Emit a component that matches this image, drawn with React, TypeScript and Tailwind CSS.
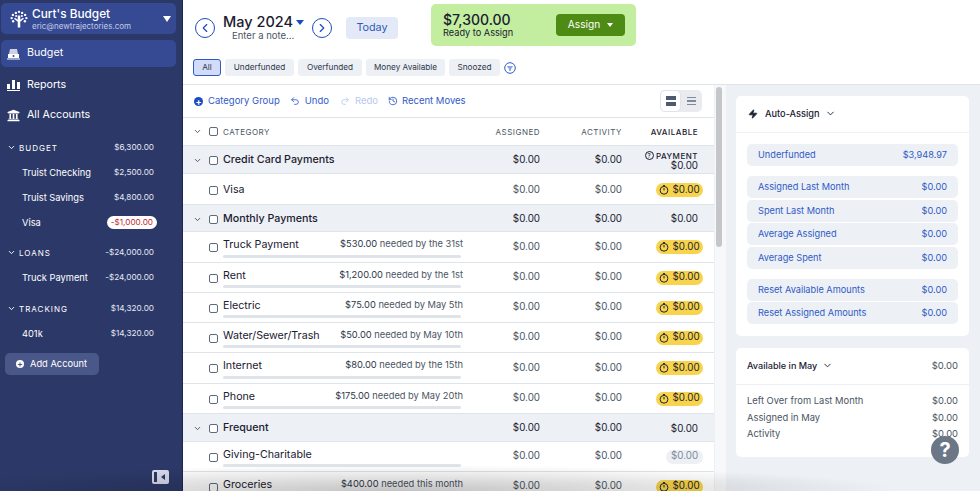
import React from 'react';
import { ChevronDown, ChevronLeft, ChevronRight, History, Undo2, Redo2, Zap } from 'lucide-react';
import { FaUniversity } from 'react-icons/fa';

interface SideAccount {
    name: string;
    amount: string;
    negative?: boolean;
}

interface SideGroup {
    title: string;
    total: string;
    accounts: SideAccount[];
}

const sideGroups: SideGroup[] = [
    {
        title: 'BUDGET',
        total: '$6,300.00',
        accounts: [
            { name: 'Truist Checking', amount: '$2,500.00' },
            { name: 'Truist Savings', amount: '$4,800.00' },
            { name: 'Visa', amount: '-$1,000.00', negative: true },
        ],
    },
    { title: 'LOANS', total: '-$24,000.00', accounts: [{ name: 'Truck Payment', amount: '-$24,000.00' }] },
    { title: 'TRACKING', total: '$14,320.00', accounts: [{ name: '401k', amount: '$14,320.00' }] },
];

const Checkbox = () => <span className="block h-[9px] w-[9px] shrink-0 rounded-[2px] border border-[#5f6b7c] bg-white" />;

const Clock = () => (
    <svg width="10" height="10" viewBox="0 0 10 10" fill="none" stroke="#1f2430" strokeWidth="1">
        <circle cx="5" cy="5.3" r="3.9" />
        <path d="M5 3v2.4" />
        <path d="M4 .6h2" />
    </svg>
);

const Yellow = () => (
    <span className="flex h-[14px] w-[47px] items-center justify-center gap-[3px] rounded-full bg-[#f8d44c] text-[9.8px] text-[#1f2430]">
        <Clock />
        $0.00
    </span>
);

const Logo = () => (
    <svg width="18" height="18" viewBox="0 0 20 20" fill="white">
        <path d="M8.6 19.5V13L4.5 9.6l1-1.1 3.1 2.2V6h2.8v4.7l3.1-2.2 1 1.1-4.1 3.4v6.5z" />
        <circle cx="3.2" cy="5.5" r="1.3" />
        <circle cx="6.5" cy="3.2" r="1.3" />
        <circle cx="10" cy="2" r="1.3" />
        <circle cx="13.5" cy="3.2" r="1.3" />
        <circle cx="16.8" cy="5.5" r="1.3" />
        <circle cx="1.8" cy="9" r="1.3" />
        <circle cx="18.2" cy="9" r="1.3" />
        <circle cx="3.5" cy="12.5" r="1.3" />
        <circle cx="16.5" cy="12.5" r="1.3" />
        <circle cx="6.8" cy="6.6" r="1.1" />
        <circle cx="13.2" cy="6.6" r="1.1" />
    </svg>
);

const Sidebar = () => (
    <aside className="flex h-full w-[183px] shrink-0 flex-col border-r border-r-[#1d2750] bg-[#2c3968] pt-[3px] text-white">
        <div className="ml-px mr-[6px] flex h-[31px] items-center rounded-[5px] bg-[#364a93] pl-[9px] pr-[5px]">
            <Logo />
            <div className="ml-[4px] flex-1 leading-none">
                <div className="text-[11.8px] font-medium leading-[14px]">Curt's Budget</div>
                <div className="text-[8px] leading-[10px] text-[#c3cbe6]">eric@newtrajectories.com</div>
            </div>
            <span className="h-0 w-0 border-x-[4.5px] border-t-[6px] border-x-transparent border-t-white" />
        </div>
        <div className="ml-px mr-[6px] mt-[6px] flex h-[27px] items-center gap-[7px] rounded-[5px] bg-[#364a93] pl-[6px] text-[10.7px]">
            <svg width="13" height="12" viewBox="0 0 13 12" fill="white">
                <path d="M3 1h7l1 5H2z" opacity=".75" />
                <path d="M1 6h11v4H1z" />
                <path d="M0 10.5h13v1H0z" />
                <circle cx="6.5" cy="8" r="1" fill="#364a93" />
            </svg>
            Budget
        </div>
        <div className="mt-[3px] flex h-[30px] items-center gap-[7px] pl-[7px] text-[10.7px]">
            <svg width="13" height="12" viewBox="0 0 13 12" fill="white">
                <path d="M0 5h3v5H0zM5 1h3v9H5zM10 3h3v7h-3zM0 11h13v1H0z" />
            </svg>
            Reports
        </div>
        <div className="flex h-[30px] items-center gap-[7px] pl-[7px] text-[10.7px]">
            <FaUniversity size={13} />
            All Accounts
        </div>
        {sideGroups.map((group, i) => (
            <div key={group.title} className={i === 2 ? 'mt-[6px]' : 'mt-[5px]'}>
                <div className="flex h-[25px] items-center pl-[7px] pr-[28px] text-[8px]">
                    <ChevronDown size={9} strokeWidth={2.5} />
                    <span className="ml-[3px] flex-1 tracking-[1px]">{group.title}</span>
                    <span className="text-[8.2px] text-[#e6e9f5]">{group.total}</span>
                </div>
                {group.accounts.map((a) => (
                    <div key={a.name} className="flex h-[25px] items-center pl-[22px] pr-[28px] text-[9.3px]">
                        <span className="flex-1">{a.name}</span>
                        {a.negative ? (
                            <span className="-mr-[3px] rounded-full bg-white px-[4px] text-[8.2px] leading-[13px] text-[#c1272d]">{a.amount}</span>
                        ) : (
                            <span className="text-[8.2px] text-[#e6e9f5]">{a.amount}</span>
                        )}
                    </div>
                ))}
            </div>
        ))}
        <div className="ml-[5px] mt-[7px] flex h-[22px] w-[94px] items-center gap-[6px] rounded-[5px] bg-[#4a5789] pl-[11px] text-[9.3px]">
            <span className="flex h-[8px] w-[8px] items-center justify-center rounded-full bg-white text-[8px] font-bold leading-none text-[#4a5789]">+</span>
            Add Account
        </div>
        <div className="mt-auto mb-[7px] ml-[152px] flex h-[14px] w-[17px] items-center rounded-[2px] bg-[#d7dbea] pl-[2px]">
            <span className="h-[10px] w-[3px] bg-[#2c3968]" />
            <span className="ml-[4px] h-0 w-0 border-y-[3px] border-r-[4px] border-y-transparent border-r-[#2c3968]" />
        </div>
    </aside>
);

const TopBar = () => (
    <div className="h-[85px] shrink-0 border-b border-b-[#dfe3ea] pl-[10px]">
        <div className="flex h-[47px] items-start">
            <div className="ml-[2px] mt-[18px] flex h-[20px] w-[20px] items-center justify-center rounded-full border-[1.5px] border-[#1b4bc4] text-[#1b4bc4]">
                <ChevronLeft size={14} />
            </div>
            <div className="ml-[8px] mt-[14px] w-[81px]">
                <div className="flex items-center whitespace-nowrap text-[14.5px] font-medium leading-[16px] text-[#1a2030]">
                    May 2024
                    <span className="ml-[3px] h-0 w-0 border-x-[4.5px] border-t-[5px] border-x-transparent border-t-[#1b4bc4]" />
                </div>
                <div className="ml-[9px] text-[9.5px] leading-[11px] text-[#4b5563]">Enter a note...</div>
            </div>
            <div className="ml-[8px] mt-[18px] flex h-[20px] w-[20px] items-center justify-center rounded-full border-[1.5px] border-[#1b4bc4] text-[#1b4bc4]">
                <ChevronRight size={14} />
            </div>
            <div className="ml-[14px] mt-[17px] flex h-[22px] w-[52px] items-center justify-center rounded-[4px] bg-[#e4e9f8] text-[10.8px] text-[#2f5bb7]">Today</div>
            <div className="ml-[33px] mt-[4px] flex h-[42px] w-[205px] items-center rounded-[5px] bg-[#c3ee9f] pl-[12px] pr-[11px]">
                <div className="flex-1 leading-none">
                    <div className="text-[14px] font-medium leading-[15px] text-[#1a2030]">$7,300.00</div>
                    <div className="text-[9.2px] leading-[12px] text-[#1a2030]">Ready to Assign</div>
                </div>
                <div className="flex h-[22px] w-[69px] items-center justify-center gap-[7px] rounded-[4px] bg-[#4d8b14] text-[10.2px] text-white">
                    Assign
                    <span className="h-0 w-0 border-x-[3px] border-t-[4px] border-x-transparent border-t-white" />
                </div>
            </div>
        </div>
        <div className="mt-[12px] flex items-center gap-[4px] text-[8.2px] text-[#2d3748]">
            <span className="flex h-[17px] w-[28px] items-center justify-center rounded-[3px] border border-[#2f5bc7] bg-[#d2dbf8]">All</span>
            <span className="flex h-[17px] w-[69px] items-center justify-center rounded-[3px] bg-[#edf0f5]">Underfunded</span>
            <span className="flex h-[17px] w-[64px] items-center justify-center rounded-[3px] bg-[#edf0f5]">Overfunded</span>
            <span className="flex h-[17px] w-[79px] items-center justify-center rounded-[3px] bg-[#edf0f5]">Money Available</span>
            <span className="flex h-[17px] w-[51px] items-center justify-center rounded-[3px] bg-[#edf0f5]">Snoozed</span>
            <svg width="12" height="12" viewBox="0 0 12 12" fill="none">
                <circle cx="6" cy="6" r="5.3" stroke="#2f5bc7" />
                <path d="M2.8 4h6.4L7 7v1.8H5V7z" fill="#8aa3e6" />
            </svg>
        </div>
    </div>
);

const Toolbar = () => (
    <div className="flex h-[33px] shrink-0 items-center border-b border-b-[#dfe3ea] pl-[11px] pr-[12px] text-[9.5px] text-[#2f5bc7]">
        <span className="flex h-[9px] w-[9px] items-center justify-center rounded-full bg-[#1b4bc4] text-[9px] font-bold leading-none text-white">+</span>
        <span className="ml-[5px]">Category Group</span>
        <Undo2 size={10} className="ml-[10px]" />
        <span className="ml-[5px]">Undo</span>
        <Redo2 size={10} className="ml-[11px] text-[#b9c8ef]" />
        <span className="ml-[5px] text-[#b9c8ef]">Redo</span>
        <History size={10} className="ml-[10px]" />
        <span className="ml-[4px]">Recent Moves</span>
        <div className="ml-auto flex h-[22px] w-[42px] items-center rounded-[5px] bg-[#e9ebef]">
            <span className="flex h-[22px] w-[21px] flex-col items-center justify-center gap-[2px] rounded-[5px] border border-[#dfe3ea] bg-white">
                <span className="h-[4px] w-[10px] bg-[#4d5a70]" />
                <span className="h-[4px] w-[10px] bg-[#4d5a70]" />
            </span>
            <span className="flex w-[21px] flex-col items-center gap-[2px]">
                <span className="h-[1.5px] w-[9px] bg-[#7f8a9a]" />
                <span className="h-[1.5px] w-[9px] bg-[#7f8a9a]" />
                <span className="h-[1.5px] w-[9px] bg-[#7f8a9a]" />
            </span>
        </div>
    </div>
);

const GroupRow = ({ name, h = 27, payment }: { name: string; h?: number; payment?: boolean }) => (
    <div style={{ height: h }} className="flex shrink-0 items-center border-b border-b-[#dfe3ea] bg-[#edf0f5] pl-[10px] pr-[16px] pt-[2px] text-[9.8px] text-[#1a2030]">
        <ChevronDown size={9} className="mr-[7px] text-[#4b5563]" strokeWidth={2.5} />
        <Checkbox />
        <span className="ml-[5px] flex-1 text-[10.7px] font-medium">{name}</span>
        <span className="w-[82px] text-right">$0.00</span>
        <span className="w-[82px] text-right">$0.00</span>
        <div className="w-[76px] text-right leading-[10px]">
            {payment && (
                <div className="flex items-center justify-end gap-[2px] text-[8px] font-medium tracking-[0.5px]">
                    <span className="flex h-[9px] w-[9px] items-center justify-center rounded-full border border-[#1a2030] text-[6px] leading-none">?</span>
                    PAYMENT
                </div>
            )}
            $0.00
        </div>
    </div>
);

interface CatProps {
    name: string;
    needed?: string;
    detail?: string;
    h?: number;
    grey?: boolean;
    bar?: boolean;
}

const CatRow = ({ name, needed, detail, h = 30, grey, bar = true }: CatProps) => (
    <div style={{ height: h }} className={`flex shrink-0 items-center border-b border-b-[#dfe3ea] bg-white pl-[26px] pr-[11px] text-[9.8px] ${bar ? '' : 'pt-[2px]'}`}>
        <span className={bar ? 'mt-[1px]' : ''}>
            <Checkbox />
        </span>
        <div className="ml-[5px] w-[240px]">
            <div className="flex items-baseline justify-between">
                <span className={`text-[10.7px] text-[#1a2030] ${bar ? 'translate-y-px' : ''}`}>{name}</span>
                {needed && (
                    <span className="text-[9.3px] text-[#4b5563]">
                        <span className="text-[#2d3748]">{needed}</span> {detail}
                    </span>
                )}
            </div>
            {bar && <div className="mt-[2px] h-[3px] w-[238px] rounded-full bg-[#dfe3ea]" />}
        </div>
        <span className="w-[77px] text-right text-[#4b5563]">$0.00</span>
        <span className="w-[82px] text-right text-[#4b5563]">$0.00</span>
        <span className="flex w-[81px] justify-end">
            {grey ? (
                <span className="flex h-[14px] w-[37px] items-center justify-center rounded-full bg-[#edf0f5] text-[#7f8a9a]">$0.00</span>
            ) : (
                <Yellow />
            )}
        </span>
    </div>
);

const BudgetTable = () => (
    <div className="flex w-[531px] shrink-0 flex-col overflow-hidden">
        <Toolbar />
        <div className="flex h-[28px] shrink-0 items-center border-b border-b-[#dfe3ea] pl-[10px] pr-[16px] text-[8px] tracking-[0.5px] text-[#4b5563]">
            <ChevronDown size={9} className="mr-[7px]" strokeWidth={2.5} />
            <Checkbox />
            <span className="ml-[5px] flex-1">CATEGORY</span>
            <span className="w-[82px] text-right">ASSIGNED</span>
            <span className="w-[82px] text-right">ACTIVITY</span>
            <span className="w-[76px] text-right font-medium text-[#1a2030]">AVAILABLE</span>
        </div>
        <GroupRow name="Credit Card Payments" h={28} payment />
        <CatRow name="Visa" h={31} bar={false} />
        <GroupRow name="Monthly Payments" h={27} />
        <CatRow name="Truck Payment" needed="$530.00" detail="needed by the 31st" h={31} />
        <CatRow name="Rent" needed="$1,200.00" detail="needed by the 1st" />
        <CatRow name="Electric" needed="$75.00" detail="needed by May 5th" />
        <CatRow name="Water/Sewer/Trash" needed="$50.00" detail="needed by May 10th" />
        <CatRow name="Internet" needed="$80.00" detail="needed by the 15th" h={31} />
        <CatRow name="Phone" needed="$175.00" detail="needed by May 20th" />
        <GroupRow name="Frequent" h={28} />
        <CatRow name="Giving-Charitable" grey />
        <CatRow name="Groceries" needed="$400.00" detail="needed this month" />
    </div>
);

const AssignRow = ({ label, value }: { label: string; value: string }) => (
    <div className="flex h-[22px] items-center justify-between rounded-[5px] bg-[#edf0f5] px-[11px] text-[9.2px] text-[#2f5bc7]">
        <span>{label}</span>
        <span>{value}</span>
    </div>
);

const Inspector = () => (
    <div className="flex w-[253px] shrink-0 flex-col bg-[#edf0f5] pl-[9px] pr-[11px] pt-[11px]">
        <div className="h-[240px] rounded-[5px] bg-white">
            <div className="flex h-[37px] items-center gap-[7px] border-b border-b-[#edf0f5] pl-[12px] text-[9.2px] font-medium text-[#1a2030]">
                <Zap size={10} fill="#1a2030" />
                <span className="flex items-center gap-[6px]">
                    Auto-Assign
                    <ChevronDown size={11} />
                </span>
            </div>
            <div className="flex flex-col px-[11px] pt-[11px]">
                <AssignRow label="Underfunded" value="$3,948.97" />
                <div className="mt-[10px] flex flex-col gap-[1.5px]">
                    <AssignRow label="Assigned Last Month" value="$0.00" />
                    <AssignRow label="Spent Last Month" value="$0.00" />
                    <AssignRow label="Average Assigned" value="$0.00" />
                    <AssignRow label="Average Spent" value="$0.00" />
                </div>
                <div className="mt-[10px] flex flex-col gap-[1.5px]">
                    <AssignRow label="Reset Available Amounts" value="$0.00" />
                    <AssignRow label="Reset Assigned Amounts" value="$0.00" />
                </div>
            </div>
        </div>
        <div className="mt-[12px] h-[109px] rounded-[5px] bg-white">
            <div className="flex h-[37px] items-center justify-between border-b border-b-[#edf0f5] px-[11px] text-[9.1px] text-[#1a2030]">
                <span className="flex items-center gap-[5px] font-medium">
                    Available in May
                    <ChevronDown size={11} />
                </span>
                <span className="text-[9.5px] text-[#4b5563]">$0.00</span>
            </div>
            <div className="px-[11px] pt-[8px] text-[9.4px] leading-[16.5px] text-[#4b5563]">
                <div className="flex justify-between"><span>Left Over from Last Month</span><span>$0.00</span></div>
                <div className="flex justify-between"><span>Assigned in May</span><span>$0.00</span></div>
                <div className="flex justify-between"><span>Activity</span><span>$0.00</span></div>
            </div>
        </div>
    </div>
);

export default function App() {
    return (
        <div className="relative flex h-[491px] w-[980px] overflow-hidden bg-white font-['Inter','Liberation_Sans',sans-serif]">
            <Sidebar />
            <main className="flex min-w-0 flex-1 flex-col">
                <TopBar />
                <div className="flex min-h-0 flex-1">
                    <BudgetTable />
                    <div className="w-[13px] shrink-0 border-x border-x-[#edf0f5] bg-[#f7f8fa] px-[1px] pt-[2px]">
                        <div className="h-[160px] w-[6px] rounded-full bg-[#c4c6ca]" />
                    </div>
                    <Inspector />
                </div>
            </main>
            <div className="pointer-events-none absolute left-[-100px] top-[465px] h-[52px] w-[1000px] bg-[radial-gradient(closest-side,rgba(0,0,0,0.24),transparent)]" />
            <div className="absolute left-[931px] top-[436px] flex h-[28px] w-[28px] items-center justify-center rounded-full bg-[#6b7787] text-[20px] font-bold text-white">?</div>
        </div>
    );
}
